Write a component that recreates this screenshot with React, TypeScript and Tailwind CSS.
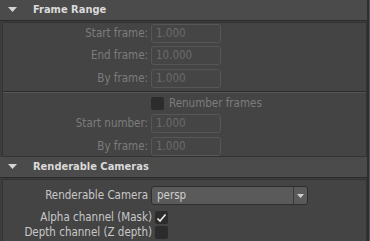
import React from "react";

const font = { fontFamily: '"DejaVu Sans Condensed", "DejaVu Sans", "Liberation Sans", sans-serif' };

function Tri() {
  return (
    <svg width="9" height="5" viewBox="0 0 9 5" className="block">
      <polygon points="0,0 9,0 4.5,5" fill="#d4d4d4" />
    </svg>
  );
}

function Header({ title }: { title: string }) {
  return (
    <div className="h-[21px] bg-[#4b4b4b] border-b border-[#2a2a2a] flex items-center">
      <div className="ml-[8px] w-[9px] -mt-[2px]">
        <Tri />
      </div>
      <div className="ml-[16px] text-[11px] font-bold text-[#dadada] leading-none -mt-[1px]">{title}</div>
    </div>
  );
}

function Field({ label, value, mt }: { label: string; value: string; mt: string }) {
  return (
    <div className={`flex items-center h-[19px] ${mt}`}>
      <div className="w-[145px] text-right text-[11.5px] text-[#7c7c7c] leading-none">{label}</div>
      <div className="ml-[3px] w-[70px] h-[19px] rounded-[3px] border border-[#565656] bg-[#454545] flex items-center pl-[4px] text-[11.5px] text-[#6b6b6b] leading-none">
        {value}
      </div>
    </div>
  );
}

export default function App() {
  return (
    <div className="w-[370px] h-[241px] overflow-hidden bg-[#3d3d3d] flex" style={font}>
      <div className="w-[367px] flex flex-col">
        <Header title="Frame Range" />
        <div className="mt-[1px] ml-[2px] h-[135px] border border-[#333333] bg-[#444444] flex flex-col pt-[1px]">
          <Field label="Start frame:" value="1.000" mt="" />
          <Field label="End frame:" value="10.000" mt="mt-[3px]" />
          <Field label="By frame:" value="1.000" mt="mt-[4px]" />
          <div className="mt-[3px] h-[1px] bg-[#2c2c2c]" />
          <div className="h-[1px] bg-[#555555]" />
          <div className="mt-[4px] flex items-center h-[13px]">
            <div className="ml-[148px] w-[13px] h-[13px] rounded-[2px] bg-[#2c2c2c]" />
            <div className="ml-[5px] text-[11.5px] text-[#7c7c7c] leading-none">Renumber frames</div>
          </div>
          <Field label="Start number:" value="1.000" mt="mt-[4px]" />
          <Field label="By frame:" value="1.000" mt="mt-[4px]" />
        </div>
        <Header title="Renderable Cameras" />
        <div className="mt-[1px] ml-[2px] flex-1 border border-[#333333] border-b-0 bg-[#444444] flex flex-col pt-[6px]">
          <div className="flex items-center h-[19px]">
            <div className="w-[145px] text-right text-[11.5px] text-[#c8c8c8] leading-none">Renderable Camera</div>
            <div className="ml-[3px] w-[157px] h-[19px] rounded-[3px] border border-[#2e2e2e] bg-[#5a5a5a] flex items-center">
              <div className="flex-1 pl-[5px] text-[11.5px] text-[#cfcfcf] leading-none">persp</div>
              <div className="w-[14px] h-full border-l border-[#3a3a3a] flex items-center justify-center">
                <svg width="7" height="4" viewBox="0 0 7 4">
                  <polygon points="0,0 7,0 3.5,4" fill="#d0d0d0" />
                </svg>
              </div>
            </div>
          </div>
          <div className="mt-[6px] flex items-center h-[13px]">
            <div className="w-[149px] text-right text-[11.5px] text-[#c8c8c8] leading-none">Alpha channel (Mask)</div>
            <div className="ml-[3px] w-[13px] h-[13px] rounded-[2px] bg-[#2c2c2c] flex items-center justify-center">
              <svg width="11" height="10" viewBox="0 0 11 10">
                <path d="M1.5 5.5 L4 8 L9.5 1.5" stroke="#eeeeee" strokeWidth="1.6" fill="none" />
              </svg>
            </div>
          </div>
          <div className="mt-[2px] flex items-center h-[13px]">
            <div className="w-[149px] text-right text-[11.5px] text-[#c8c8c8] leading-none">Depth channel (Z depth)</div>
            <div className="ml-[3px] w-[13px] h-[13px] rounded-[2px] bg-[#2c2c2c]" />
          </div>
        </div>
      </div>
      <div className="w-[2px] bg-[#2e2e2e]" />
      <div className="w-[1px] bg-[#525252]" />
    </div>
  );
}
